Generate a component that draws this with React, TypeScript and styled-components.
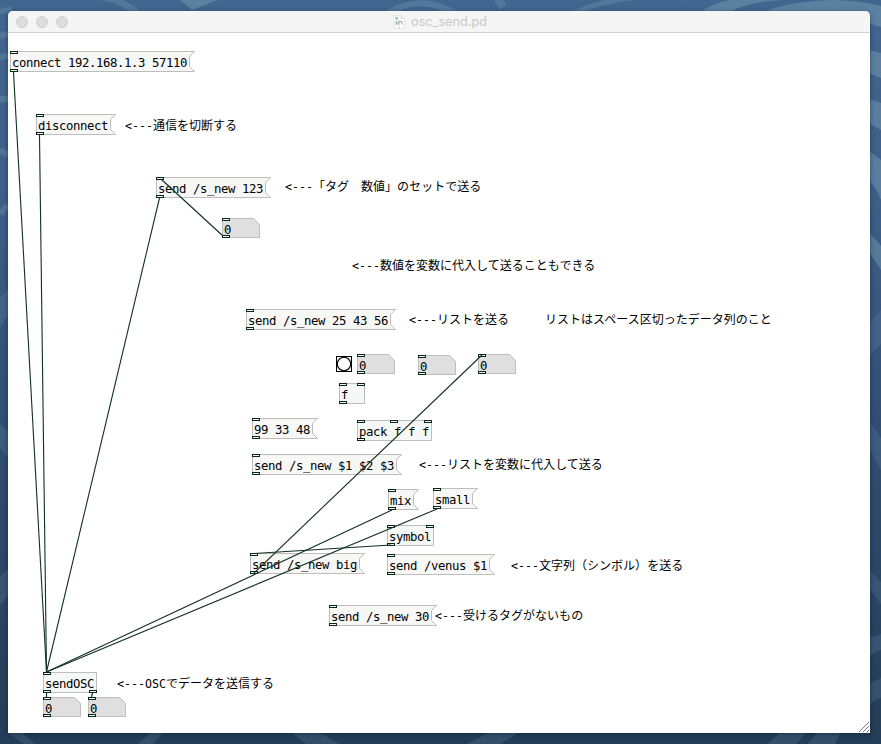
import React from 'react';
import styled, { createGlobalStyle } from 'styled-components';

const GlobalStyle = createGlobalStyle`
  html, body, #root { margin: 0; width: 881px; height: 744px; overflow: hidden; }
  * { box-sizing: border-box; }
`;

const Desktop = styled.main`
  position: relative;
  width: 881px;
  height: 744px;
  padding: 11px 11px 11px 8px;
  background: linear-gradient(#42668f 0%, #3e6089 25%, #304d70 60%, #243d57 100%);
`;

const Wallpaper = styled.svg`
  position: absolute;
  inset: 0;
`;

const Window = styled.section`
  position: relative;
  display: flex;
  flex-direction: column;
  width: 862px;
  height: 722px;
  border-radius: 5px 5px 0 0;
  overflow: hidden;
  background: #fff;
`;

const WindowShadow = styled.div`
  position: relative;
  border-radius: 5px 5px 0 0;
  box-shadow: 0 1px 5px rgba(0, 15, 40, 0.45);
`;

const TitleBar = styled.header`
  display: grid;
  grid-template-columns: 1fr auto 1fr;
  align-items: center;
  flex: none;
  height: 22px;
  padding: 0 8px;
  background: #f5f5f5;
  border-bottom: 1px solid #cfcfcf;
`;

const Lights = styled.div`
  display: flex;
  gap: 8px;
`;

const Light = styled.span`
  width: 12px;
  height: 12px;
  border: 1px solid #cecece;
  border-radius: 50%;
  background: #dcdcdc;
`;

const Title = styled.h1`
  display: flex;
  align-items: center;
  gap: 6px;
  margin: 0;
  padding: 1px 0 0 2px;
  font: 400 12.7px/20px Inter, "Liberation Sans", sans-serif;
  color: #c8c8c8;
  white-space: pre;
`;

const Patch = styled.div`
  position: relative;
  flex: 1;
`;

const Placed = styled.div<{ $x: number; $y: number }>`
  position: absolute;
  left: ${(p) => p.$x}px;
  top: ${(p) => p.$y}px;
`;

const Shape = styled.svg`
  display: block;
`;

const Mono = styled.span`
  font-family: "DejaVu Sans Mono", "Liberation Mono", monospace;
  font-size: 11.63px;
`;

const NodeText = styled(Mono)`
  position: absolute;
  left: 2px;
  top: 5px;
  font-size: 12.3px;
  letter-spacing: -0.405px;
  line-height: 15px;
  color: #000;
  white-space: pre;
`;

const Comment = styled(Placed)`
  font: 12.03px/16px "Noto Sans CJK JP", sans-serif;
  color: #000;
  white-space: pre;
`;

const Overlay = styled.svg`
  position: absolute;
  inset: 0;
`;

type Kind = 'message' | 'object' | 'number';

interface PatchNode {
  kind: Kind;
  x: number;
  y: number;
  text: string;
  inlets?: number[];
  outlets?: number[];
}

const nodes: PatchNode[] = [
  { kind: 'message', x: 2, y: 18, text: 'connect 192.168.1.3 57110' },
  { kind: 'message', x: 28, y: 81, text: 'disconnect' },
  { kind: 'message', x: 148, y: 144, text: 'send /s_new 123' },
  { kind: 'number', x: 214, y: 185, text: '0' },
  { kind: 'message', x: 238, y: 276, text: 'send /s_new 25 43 56' },
  { kind: 'number', x: 349, y: 321, text: '0' },
  { kind: 'number', x: 410, y: 322, text: '0' },
  { kind: 'number', x: 470, y: 321, text: '0' },
  { kind: 'object', x: 331, y: 350, text: 'f', inlets: [0, 18] },
  { kind: 'message', x: 244, y: 385, text: '99 33 48' },
  { kind: 'object', x: 349, y: 387, text: 'pack f f f', inlets: [0, 33, 67] },
  { kind: 'message', x: 244, y: 421, text: 'send /s_new $1 $2 $3' },
  { kind: 'message', x: 380, y: 456, text: 'mix' },
  { kind: 'message', x: 425, y: 455, text: 'small' },
  { kind: 'object', x: 379, y: 492, text: 'symbol', inlets: [0, 39] },
  { kind: 'message', x: 242, y: 520, text: 'send /s_new big' },
  { kind: 'message', x: 379, y: 521, text: 'send /venus $1' },
  { kind: 'message', x: 321, y: 572, text: 'send /s_new 30' },
  { kind: 'object', x: 35, y: 639, text: 'sendOSC', outlets: [0, 46] },
  { kind: 'number', x: 35, y: 664, text: '0' },
  { kind: 'number', x: 80, y: 664, text: '0' },
];

const comments = [
  { x: 117, y: 84, latin: '<---', text: '通信を切断する' },
  { x: 277, y: 145, latin: '<---', text: '「タグ　数値」のセットで送る' },
  { x: 344, y: 224, latin: '<---', text: '数値を変数に代入して送ることもできる' },
  { x: 401, y: 278, latin: '<---', text: 'リストを送る' },
  { x: 537, y: 278, latin: '', text: 'リストはスペース区切ったデータ列のこと' },
  { x: 411, y: 423, latin: '<---', text: 'リストを変数に代入して送る' },
  { x: 503, y: 524, latin: '<---', text: '文字列（シンボル）を送る' },
  { x: 427, y: 574, latin: '<---', text: '受けるタグがないもの' },
  { x: 109, y: 642, latin: '<---OSC', text: 'でデータを送信する' },
];

const wires = [
  [5.5, 39, 38.5, 639],
  [31.5, 102, 38.5, 639],
  [151.5, 165, 38.5, 639],
  [153, 146, 215, 203],
  [474, 322, 246, 540],
  [384, 477, 38.5, 639],
  [429, 476, 38.5, 639],
  [383, 512, 246, 520.5],
  [38.5, 660, 38.5, 664],
  [84.5, 660, 83.5, 664],
];

const widthOf = (n: PatchNode) => {
  if (n.kind === 'number') return 38;
  if (n.kind === 'message') return n.text.length * 7 + 10;
  return Math.max(26, n.text.length * 7 + 5);
};

const outline = (kind: Kind, w: number, h: number) => {
  const r = w - 0.5;
  const b = h - 0.5;
  if (kind === 'message')
    return `M.5 .5H${r}L${r - 5} 5.5V${b - 5}L${r} ${b}H.5Z`;
  if (kind === 'number') return `M.5 .5H${r - 6}L${r} 6.5V${b}H.5Z`;
  return `M.5 .5H${r}V${b}H.5Z`;
};

function Port({ x, y }: { x: number; y: number }) {
  return <rect x={x + 0.5} y={y + 0.5} width="7" height="2" fill="#f2fff6" stroke="#082814" />;
}

function NodeBox({ node }: { node: PatchNode }) {
  const w = widthOf(node);
  const h = node.kind === 'number' ? 20 : 21;
  const fill = { message: '#f7f7f6', object: '#f5f8f7', number: '#dfdfdf' }[node.kind];
  return (
    <Placed $x={node.x} $y={node.y}>
      <Shape width={w} height={h}>
        <path d={outline(node.kind, w, h)} fill={fill} stroke="#bdbdbd" />
        {(node.inlets ?? [0]).map((x) => <Port key={`i${x}`} x={x} y={0} />)}
        {(node.outlets ?? [0]).map((x) => <Port key={`o${x}`} x={x} y={h - 3} />)}
      </Shape>
      <NodeText>{node.text}</NodeText>
    </Placed>
  );
}

function Bang() {
  return (
    <Placed $x={328} $y={323}>
      <Shape width="16" height="16">
        <rect x=".5" y=".5" width="15" height="15" fill="#fcfcfc" stroke="#000" />
        <circle cx="8" cy="8" r="6.7" fill="#fcfcfc" stroke="#000" strokeWidth="1.1" />
      </Shape>
    </Placed>
  );
}

function DocumentIcon() {
  return (
    <svg width="12" height="14" viewBox="0 0 12 15">
      <path d="M.5 .5H8L11.5 4V14.5H.5Z" fill="#fff" stroke="#e2e2e2" />
      <path d="M8 .5V4H11.5" fill="#eee" stroke="#dedede" />
      <rect x="2" y="2" width="3" height="3" fill="#8fd6a4" />
      <path d="M3 6V11M3 8.5H6M6 6V11M6 7H9V10" fill="none" stroke="#aaa" strokeWidth="1.2" />
      <path d="M5 13H7" stroke="#ccc" />
    </svg>
  );
}

function Backdrop() {
  return (
    <Wallpaper width="881" height="744" fill="none">
      <g stroke="#87aebd" strokeOpacity=".26">
        <path d="M-2 13Q3 10 12 9" strokeWidth="5" />
        <path d="M104 -3Q122 0 138 14" strokeWidth="7" />
        <path d="M388 13Q422 -7 456 14" strokeWidth="6" />
        <path d="M497 -3L503 7" strokeWidth="8" />
        <path d="M0 36L8 34M0 58L8 55M0 99L8 99M0 150L8 155M0 214L8 205" strokeWidth="6" />
        <path d="M574 13Q620 -8 685 -2" strokeWidth="5" />
      </g>
      <g fill="#87aebd" fillOpacity=".38">
        <path d="M180 0H218L192 10Z" />
        <path d="M762 12Q790 1 835 0Q862 1 881 6V27L868 23V12Z" />
        <path d="M700 12Q716 2 730 0H782Q748 2 730 12Z" />
        <path d="M869 50L881 53V78L869 73Z" />
        <path d="M869 99L881 103V130L869 123Z" />
        <path d="M869 151L881 160V200Q877 188 869 181Z" />
        <path d="M869 232L881 246V270L869 252Z" />
      </g>
      <g fill="#6889a6" fillOpacity=".24">
        <path d="M869 324L881 310V344L869 356Z" />
        <path d="M869 420L881 438V470L869 449Z" />
        <path d="M869 569L881 582V604L869 588Z" />
        <path d="M869 638L881 634V650L869 656Z" />
        <path d="M869 684L881 678V698L869 704Z" />
        <path d="M0 298L8 289V316L0 326Z" />
        <path d="M0 424L8 431V458L0 448Z" />
        <path d="M0 577L8 569V595L0 606Z" />
        <path d="M8 733H22L35 744H24Z" />
        <path d="M150 733H163L153 744H138Z" />
        <path d="M292 733H320L340 744H306Z" />
        <path d="M488 733H518L500 744H467Z" />
        <path d="M780 733H806L796 744H768Z" />
        <path d="M817 733H840L835 744H808Z" />
      </g>
    </Wallpaper>
  );
}

export default function App() {
  return (
    <Desktop>
      <GlobalStyle />
      <Backdrop />
      <WindowShadow>
        <Window>
          <TitleBar>
            <Lights>
              <Light />
              <Light />
              <Light />
            </Lights>
            <Title>
              <DocumentIcon />
              osc_send.pd
            </Title>
          </TitleBar>
          <Patch>
            {nodes.map((n) => <NodeBox key={`${n.x}-${n.y}`} node={n} />)}
            <Bang />
            {comments.map((c) => (
              <Comment key={c.text} $x={c.x} $y={c.y}>
                {c.latin && <Mono>{c.latin}</Mono>}
                {c.text}
              </Comment>
            ))}
            <Overlay width="862" height="700">
              {wires.map(([x1, y1, x2, y2]) => (
                <line
                  key={`${x1}-${y1}`}
                  x1={x1}
                  y1={y1}
                  x2={x2}
                  y2={y2}
                  stroke="#12301e"
                  strokeWidth="1.1"
                />
              ))}
              <path
                d="M851 699L861 689M855 699L861 693M859 699L861 697"
                stroke="#777"
                strokeWidth="1"
              />
            </Overlay>
          </Patch>
        </Window>
      </WindowShadow>
    </Desktop>
  );
}
